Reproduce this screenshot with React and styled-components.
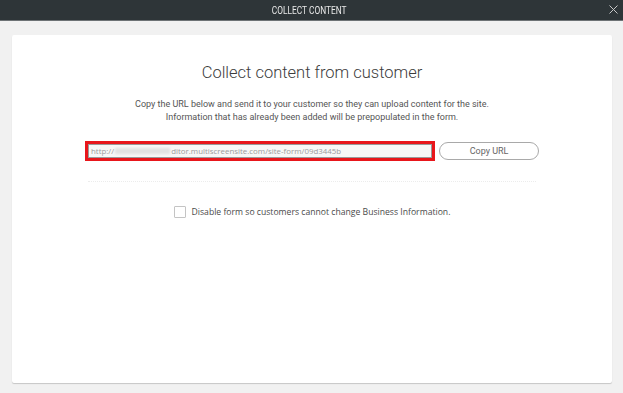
import React from "react";
import styled, { createGlobalStyle } from "styled-components";

const Global = createGlobalStyle`
  html, body { margin: 0; padding: 0; }
  body { background: #f1f1f1; font-family: "Roboto", "Liberation Sans", sans-serif; }
  #root { height: 393px; }
`;

const Page = styled.div`
  width: 623px;
  height: 393px;
  display: flex;
  flex-direction: column;
  background: #f1f1f1;
  overflow: hidden;
`;

const TopBar = styled.header`
  height: 20px;
  flex: none;
  background: #2e3538;
  border-bottom: 1px solid #6d7275;
  display: flex;
  align-items: center;
  justify-content: center;
  position: relative;
`;

const BarTitle = styled.span`
  display: inline-block;
  color: #e8e8e8;
  font-family: "Roboto", sans-serif;
  font-size: 11px;
  transform: scaleX(0.76);
  margin-right: 4px;
`;

const Close = styled.button`
  position: absolute;
  right: 4px;
  top: 4px;
  width: 11px;
  height: 11px;
  padding: 0;
  border: 0;
  background: none;
  display: flex;
`;

const Body = styled.main`
  flex: 1;
  padding: 14px 11px 10px 12px;
  display: flex;
`;

const Card = styled.section`
  flex: 1;
  background: #fff;
  border-radius: 2px;
  box-shadow: 0 1px 1px rgba(0, 0, 0, 0.18);
  display: flex;
  flex-direction: column;
  align-items: center;
  padding-top: 28px;
`;

const Heading = styled.h1`
  margin: 0;
  font-family: "Roboto", sans-serif;
  font-weight: 300;
  font-size: 16.5px;
  color: #3c3c3c;
  line-height: 20px;
`;

const Lead = styled.p`
  margin: 15px 0 0;
  text-align: center;
  font-family: "Roboto", sans-serif;
  font-size: 9px;
  line-height: 13px;
  color: #555;
`;

const UrlRow = styled.div`
  margin-top: 17px;
  display: flex;
  align-items: center;
  gap: 4px;
`;

const Highlight = styled.div`
  box-sizing: border-box;
  width: 350px;
  height: 20px;
  border: 3px solid #e8161b;
  display: flex;
`;

const UrlField = styled.div`
  flex: 1;
  border: 1px solid #9a9a9a;
  background: #f7f7f7;
  display: flex;
  align-items: center;
  padding-left: 2px;
  font-family: "Open Sans", sans-serif;
  font-size: 7.9px;
  color: #9c9c9c;
  white-space: nowrap;
  overflow: hidden;
`;

const Blur = styled.span`
  display: inline-block;
  width: 55px;
  height: 6px;
  margin: 0 1px;
  background: #e2e2e2;
  filter: blur(1.2px);
`;

const CopyButton = styled.button`
  width: 100px;
  height: 18px;
  border: 1px solid #a9a9a9;
  border-radius: 9px;
  background: #fff;
  font-family: "Roboto", sans-serif;
  font-size: 9px;
  color: #666;
  padding: 0;
`;

const Divider = styled.hr`
  width: 448px;
  margin: 20px 0 0;
  border: 0;
  border-top: 1px dotted #ececec;
`;

const CheckRow = styled.label`
  margin-top: 24px;
  display: flex;
  align-items: center;
  gap: 6px;
  font-family: "Open Sans", sans-serif;
  font-size: 8.65px;
  color: #4a4a4a;
`;

const Box = styled.span`
  width: 10px;
  height: 10px;
  border: 1px solid #c4c4c4;
  border-radius: 1px;
  background: #fff;
`;

export default function App() {
  return (
    <Page>
      <Global />
      <TopBar>
        <BarTitle>COLLECT CONTENT</BarTitle>
        <Close aria-label="Close">
          <svg width="11" height="11" viewBox="0 0 11 11">
            <path d="M1.5 1.5 L9.5 9.5 M9.5 1.5 L1.5 9.5" stroke="#c8c8c8" strokeWidth="1" />
          </svg>
        </Close>
      </TopBar>
      <Body>
        <Card>
          <Heading>Collect content from customer</Heading>
          <Lead>
            Copy the URL below and send it to your customer so they can upload content for the site.
            <br />
            Information that has already been added will be prepopulated in the form.
          </Lead>
          <UrlRow>
            <Highlight>
              <UrlField>
                http://<Blur />ditor.multiscreensite.com/site-form/09d3445b
              </UrlField>
            </Highlight>
            <CopyButton>Copy URL</CopyButton>
          </UrlRow>
          <Divider />
          <CheckRow>
            <Box />
            Disable form so customers cannot change Business Information.
          </CheckRow>
        </Card>
      </Body>
    </Page>
  );
}
